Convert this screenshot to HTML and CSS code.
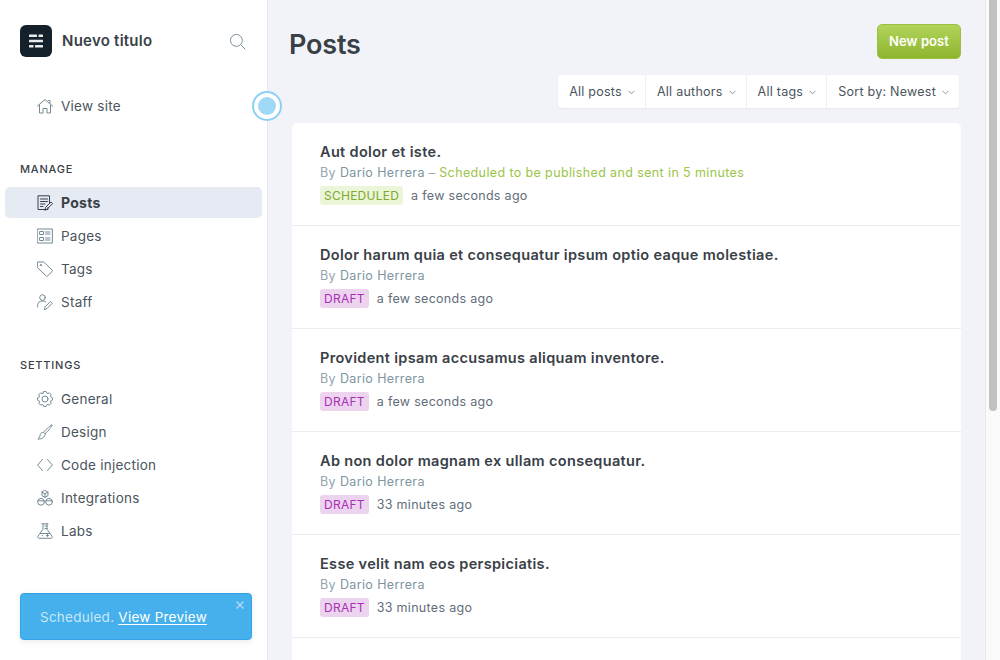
FILE: index.html
```html
<!DOCTYPE html>
<html lang="en">
<head>
    <meta charset="UTF-8">
    <title>Posts - Nuevo titulo</title>
    <link rel="stylesheet" href="styles.css">
</head>
<body>
    <div class="app">
        <aside class="sidebar">
            <div class="brand">
                <span class="logo">
                    <svg width="18" height="18" viewBox="0 0 18 18" fill="#e8ecef"><rect x="2" y="2.5" width="8" height="2.4" rx=".5"/><rect x="11.5" y="2.5" width="4.5" height="2.4" rx=".5"/><rect x="2" y="7.8" width="14" height="2.4" rx=".5"/><rect x="2" y="13" width="4.5" height="2.4" rx=".5"/><rect x="8" y="13" width="8" height="2.4" rx=".5"/></svg>
                </span>
                <span class="brand-name">Nuevo titulo</span>
                <svg class="search" width="17" height="17" viewBox="0 0 18 18" fill="none" stroke="#738a94" stroke-width="1"><circle cx="7.8" cy="7.8" r="6.3"/><path d="M12.4 12.4l5 5"/></svg>
            </div>
            <ul class="nav nav-top">
                <li><svg class="ico" viewBox="0 0 16 16"><path d="M.5 8L8 1.5 15.500 8M2.500 7v8h3.500v-4.500h4V15h3.500V7M11.500 2.500h1.500v2.500"/></svg>View site</li>
            </ul>
            <h4>MANAGE</h4>
            <ul class="nav">
                <li class="active"><svg class="ico" viewBox="0 0 16 16"><path d="M11 12.500v2H1V.8h11.500v7M3.500 4h7M3.500 6.500h7M3.500 9h4.500M3.500 11.500h2.500M8 15l.6-2.700 5.400-5.300 1.600 1.600-5.400 5.400z"/></svg>Posts</li>
                <li><svg class="ico" viewBox="0 0 16 16"><path d="M.6 1h14.800v14H.6zM3 3.500h3.500v3H3zM3 9.500h3.500v3H3zM8.500 4h4.500M8.500 6h4.500M8.500 10h4.500M8.500 12h4.500"/></svg>Pages</li>
                <li><svg class="ico" viewBox="0 0 16 16"><path d="M.7 1h6l8.500 8.200a1 1 0 0 1 0 1.300L10.500 15a1 1 0 0 1-1.300 0L.7 6.800zM4 3.500a.7.700 0 1 0 .01 0"/></svg>Tags</li>
                <li><svg class="ico" viewBox="0 0 16 16"><circle cx="5.500" cy="3.500" r="2.800"/><path d="M.6 13v-1.500c0-3 2-4.500 4.900-4.500 1.300 0 2.400.3 3.200.9M7.500 15.500l.6-2.700 5.300-5.300 1.800 1.800-5.300 5.300z"/></svg>Staff</li>
            </ul>
            <h4 class="settings">SETTINGS</h4>
            <ul class="nav">
                <li><svg class="ico" viewBox="0 0 16 16"><circle cx="8" cy="8" r="3"/><path d="M6.830.59h2.340l1.090 1.960 2.150-.62 1.660 1.660-.62 2.150 1.960 1.090v2.340l-1.960 1.090.62 2.150-1.660 1.660-2.150-.62-1.090 1.960H6.830l-1.090-1.960-2.150.62-1.660-1.660.62-2.150-1.960-1.090V6.830l1.960-1.090-.62-2.150 1.660-1.660 2.150.62z"/></svg>General</li>
                <li><svg class="ico" viewBox="0 0 16 16"><path d="M15 1c.6.500-4 6.300-7 8.800L6.500 8.300C9 5.300 14.400.5 15 1zM6.500 8.300c-1.600 0-2.800.8-3.200 2.300-.3 1-.3 1.800-.9 2.500l-1.500 2c2.200 0 4.700-.5 5.900-2.100.9-1.100 1.400-2.100 1.700-3.200"/></svg>Design</li>
                <li><svg class="ico" viewBox="0 0 16 16"><path d="M5.500 2.500L.6 8l4.900 5.500M10.500 2.500L15.400 8l-4.900 5.500"/></svg>Code injection</li>
                <li><svg class="ico" viewBox="0 0 16 16"><path d="M8 .5l3 1.700v3.400L8 7.300 5 5.600V2.200zM5 2.200l3 1.700 3-1.700M8 3.900v3.400"/><circle cx="4" cy="11.800" r="3.400"/><circle cx="12" cy="11.800" r="3.400"/><path d="M1 10.800h6M9 10.800h6"/></svg>Integrations</li>
                <li><svg class="ico" viewBox="0 0 16 16"><path d="M5 .8h6M6 .8v5.400L.9 13.300c-.5 1 .1 2 1.200 2h11.800c1.100 0 1.700-1 1.200-2L10 6.200V.8M8 3h2M8 5.500h2M3.500 10.500h9M9.500 12.500h2M10.500 11.500v2M5 12.700h.5"/></svg>Labs</li>
            </ul>
            <div class="toast">
                <span class="toast-text">Scheduled. <a>View Preview</a></span>
                <svg class="toast-close" width="8" height="8" viewBox="0 0 8 8" fill="none" stroke="#b4dcf6" stroke-width="1.300"><path d="M.5.5l7 7M7.500.5l-7 7"/></svg>
            </div>
            <span class="hotspot"><span class="hotspot-dot"></span></span>
        </aside>

        <main class="content">
            <header class="head">
                <h1>Posts</h1>
                <button class="new-post">New post</button>
            </header>
            <div class="filters">
                <div class="filter">All posts<svg class="caret" viewBox="0 0 8 5"><path d="M.7.7L4 4 7.300.7"/></svg></div>
                <div class="filter">All authors<svg class="caret" viewBox="0 0 8 5"><path d="M.7.7L4 4 7.300.7"/></svg></div>
                <div class="filter">All tags<svg class="caret" viewBox="0 0 8 5"><path d="M.7.7L4 4 7.300.7"/></svg></div>
                <div class="filter">Sort by: Newest<svg class="caret" viewBox="0 0 8 5"><path d="M.7.7L4 4 7.300.7"/></svg></div>
            </div>
            <section class="posts">
                <article class="post">
                    <h3>Aut dolor et iste.</h3>
                    <p class="meta">By <b>Dario Herrera</b> – <span class="sched">Scheduled to be published and sent in 5 minutes</span></p>
                    <p class="status"><span class="badge badge-green">SCHEDULED</span>a few seconds ago</p>
                </article>
                <article class="post">
                    <h3>Dolor harum quia et consequatur ipsum optio eaque molestiae.</h3>
                    <p class="meta">By <b>Dario Herrera</b></p>
                    <p class="status"><span class="badge badge-pink">DRAFT</span>a few seconds ago</p>
                </article>
                <article class="post">
                    <h3>Provident ipsam accusamus aliquam inventore.</h3>
                    <p class="meta">By <b>Dario Herrera</b></p>
                    <p class="status"><span class="badge badge-pink">DRAFT</span>a few seconds ago</p>
                </article>
                <article class="post">
                    <h3>Ab non dolor magnam ex ullam consequatur.</h3>
                    <p class="meta">By <b>Dario Herrera</b></p>
                    <p class="status"><span class="badge badge-pink">DRAFT</span>33 minutes ago</p>
                </article>
                <article class="post">
                    <h3>Esse velit nam eos perspiciatis.</h3>
                    <p class="meta">By <b>Dario Herrera</b></p>
                    <p class="status"><span class="badge badge-pink">DRAFT</span>33 minutes ago</p>
                </article>
                <article class="post"></article>
            </section>
        </main>

        <div class="scrollbar"><div class="thumb"></div></div>
    </div>
</body>
</html>
```

FILE: styles.css
```css
html, body {
    height: 100%;
}
body {
    margin: 0;
    font-family: "Inter", "Liberation Sans", sans-serif;
    font-size: 13px;
    color: #394047;
    background-color: #f1f3f8;
    overflow: hidden;
}
.app {
    display: flex;
    height: 660px;
    overflow: hidden;
}

/* sidebar */
.sidebar {
    position: relative;
    display: flex;
    flex-direction: column;
    flex: 0 0 268px;
    box-sizing: border-box;
    height: 660px;
    background-color: #fff;
    border-right: 1px solid #e5e8f0;
}
.brand {
    display: flex;
    align-items: center;
    height: 32px;
    margin: 25px 20px 0 20px;
}
.logo {
    display: flex;
    align-items: center;
    justify-content: center;
    width: 32px;
    height: 32px;
    border-radius: 6px;
    background-color: #15212a;
}
.brand-name {
    margin-left: 10px;
    padding-bottom: 2px;
    font-size: 15px;
    font-weight: 600;
    letter-spacing: .25px;
    color: #394047;
}
.search {
    margin-left: auto;
    margin-right: 1px;
}
.nav {
    list-style: none;
    margin: 0;
    padding: 0 5px;
}
.nav-top {
    margin-top: 33px;
}
.nav li {
    display: flex;
    align-items: center;
    height: 31px;
    margin-bottom: 2px;
    padding-left: 32px;
    border-radius: 5px;
    font-size: 13.500px;
    letter-spacing: .25px;
    color: #4b555d;
}
.nav li.active {
    background-color: #e6eaf2;
    font-size: 14px;
    font-weight: 700;
    color: #394047;
}
.ico {
    flex: none;
    width: 16px;
    height: 16px;
    margin-right: 8px;
    fill: none;
    stroke: #738a94;
    stroke-width: 1;
    stroke-linejoin: round;
    stroke-linecap: round;
}
.active .ico {
    stroke: #394047;
}
h4 {
    margin: 38px 20px 10px 20px;
    font-size: 11px;
    line-height: 16px;
    font-weight: 500;
    letter-spacing: .8px;
    color: #394047;
}
h4.settings {
    margin-top: 38px;
}
.toast {
    position: absolute;
    left: 20px;
    top: 593px;
    box-sizing: border-box;
    width: 232px;
    height: 47px;
    padding: 14px 19px;
    border: 1px solid #35a1e6;
    border-radius: 4px;
    background-color: #45b0ec;
    box-shadow: 0 2px 6px rgba(0, 0, 0, .08);
    font-size: 13.500px;
    line-height: 18px;
    letter-spacing: .25px;
    color: #c9e7f9;
}
.toast a {
    color: #fff;
    text-decoration: underline;
    text-underline-offset: 2px;
}
.toast-close {
    position: absolute;
    right: 7px;
    top: 7px;
}
.hotspot {
    position: absolute;
    left: 252px;
    top: 91px;
    display: flex;
    align-items: center;
    justify-content: center;
    box-sizing: border-box;
    width: 30px;
    height: 30px;
    border: 2px solid #8cd0f5;
    border-radius: 50%;
    background-color: #fff;
}
.hotspot-dot {
    width: 18px;
    height: 18px;
    border-radius: 50%;
    background-color: #a0d8f7;
}

/* main column */
.content {
    flex: 1;
    min-width: 0;
    padding: 24px 24px 0 21px;
}
.head {
    display: flex;
    justify-content: space-between;
    align-items: flex-start;
}
h1 {
    margin: 0;
    font-size: 27px;
    line-height: 41px;
    font-weight: 600;
    letter-spacing: -.2px;
    color: #394047;
}
.new-post {
    width: 84px;
    height: 35px;
    padding: 0 0 2px 0;
    border: 1px solid #9dc043;
    border-radius: 5px;
    background: linear-gradient(#b1d45a, #8fb52f);
    font-family: inherit;
    font-size: 13px;
    font-weight: 600;
    letter-spacing: .1px;
    color: #fff;
}
.filters {
    display: flex;
    width: max-content;
    height: 33px;
    margin: 10px 2px 0 auto;
    border-radius: 4px;
    background-color: #fff;
    box-shadow: 0 1px 2px rgba(0, 0, 0, .05);
}
.filter {
    display: flex;
    align-items: center;
    padding: 0 10px 1px 11px;
    border-left: 1px solid #eceff4;
    font-size: 12.500px;
    letter-spacing: .25px;
    color: #4b555d;
}
.filter:first-child {
    border-left: none;
}
.caret {
    width: 7px;
    height: 5px;
    margin: 2px 0 0 6px;
    fill: none;
    stroke: #738a94;
    stroke-width: 1;
}
.posts {
    margin: 15px 0 0 3px;
    border-radius: 5px 5px 0 0;
    background-color: #fff;
    box-shadow: 0 1px 2px rgba(0, 0, 0, .03);
}
.post {
    box-sizing: border-box;
    height: 103px;
    padding: 20px 28px 0 28px;
    border-bottom: 1px solid #e9edf3;
}
h3 {
    margin: 0;
    font-size: 14.500px;
    line-height: 18px;
    font-weight: 600;
    letter-spacing: .33px;
    color: #394047;
}
.meta {
    margin: 3px 0 0 0;
    font-size: 12.500px;
    line-height: 18px;
    letter-spacing: .38px;
    color: #92a5b0;
}
.meta b {
    font-weight: 400;
    color: #7d94a2;
}
.sched {
    color: #9ac548;
}
.status {
    display: flex;
    align-items: center;
    margin: 4px 0 0 0;
    font-size: 12.500px;
    letter-spacing: .3px;
    color: #626d79;
}
.badge {
    margin-right: 8px;
    padding: 0 4px;
    height: 19px;
    border-radius: 3px;
    font-size: 12px;
    line-height: 19px;
    letter-spacing: .25px;
}
.badge-green {
    background-color: #ebf5d8;
    color: #7fa82e;
}
.badge-pink {
    background-color: #ecd3ee;
    color: #a92fb5;
}

/* scrollbar gutter */
.scrollbar {
    flex: 0 0 15px;
    box-sizing: border-box;
    padding: 0 3px;
    border-left: 1px solid #e6e8ec;
    background-color: #fafafa;
}
.thumb {
    width: 8px;
    height: 411px;
    border-radius: 0 0 4px 4px;
    background-color: #c1c1c1;
}
```
